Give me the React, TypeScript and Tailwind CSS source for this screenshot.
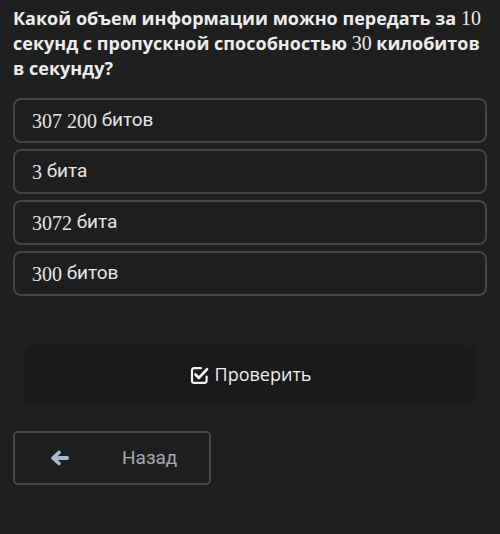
import React from "react";

const num = "font-['Liberation_Serif',serif]";

function Opt({ n, w }: { n: string; w: string }) {
  return (
    <div className="h-[45px] rounded-[8px] border-2 border-[#454545] bg-[#1e1e1e] flex items-center pl-[17px] text-[19px] text-[#e6e6e6] font-['Roboto',sans-serif]">
      <span className={num + " text-[20px]"}>{n}</span>
      <span>&nbsp;{w}</span>
    </div>
  );
}

function CheckSquare() {
  return (
    <svg width="20" height="20" viewBox="0 0 20 20" fill="none" stroke="#f2f2f2" strokeLinecap="round" strokeLinejoin="round">
      <path d="M12 3.2H5a2 2 0 0 0-2 2v10.6a2 2 0 0 0 2 2h10.6a2 2 0 0 0 2-2V11.5" strokeWidth="2.2" />
      <path d="M6.5 9.5l3.4 3.4L18 4.2" strokeWidth="2.8" />
    </svg>
  );
}

function ArrowLeft() {
  return (
    <svg width="19" height="16" viewBox="0 0 19 16" fill="none" stroke="#a9bacb" strokeLinecap="round" strokeLinejoin="round">
      <path d="M17 8H4.5" strokeWidth="4" />
      <path d="M9 2.5L3 8l6 5.5" strokeWidth="3.6" />
    </svg>
  );
}

export default function App() {
  return (
    <div className="w-[500px] h-[534px] bg-[#1f1f1f] overflow-hidden">
      <div className="px-[13px] pt-[6px] text-[18px] leading-[25px] font-bold text-[#ececec] font-['Open_Sans',sans-serif]">
        Какой объем информации можно передать за{" "}
        <span className={num + " font-normal text-[20px]"}>10</span> секунд с пропускной способностью{" "}
        <span className={num + " font-normal text-[20px]"}>30</span> килобитов в секунду?
      </div>
      <div className="mx-[13px] mt-[17px] flex flex-col gap-[6px]">
        <Opt n="307 200" w="битов" />
        <Opt n="3" w="бита" />
        <Opt n="3072" w="бита" />
        <Opt n="300" w="битов" />
      </div>
      <div className="mx-[27px] mt-[52px] h-[53px] rounded-[3px] bg-[#1a1a1a] shadow-[0_0_6px_rgba(0,0,0,0.35)] flex items-center justify-center gap-[6px] text-[#eeeeee] font-['Open_Sans',sans-serif] text-[18px]">
        <CheckSquare />
        <span>Проверить</span>
      </div>
      <div className="ml-[13px] mt-[30px] w-[198px] h-[54px] rounded-[5px] border-2 border-[#474747] flex items-center font-['Roboto',sans-serif] text-[19px] text-[#a3a9b0]">
        <span className="ml-[35px] flex"><ArrowLeft /></span>
        <span className="ml-[53px]">Назад</span>
      </div>
    </div>
  );
}
